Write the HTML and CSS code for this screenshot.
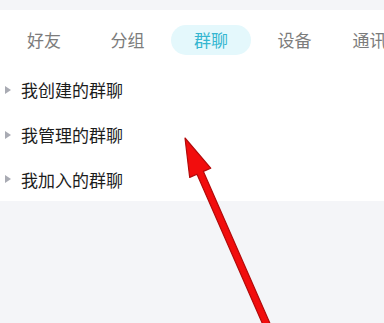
FILE: index.html
```html
<!DOCTYPE html>
<html lang="zh">
<head>
<meta charset="utf-8">
<link rel="stylesheet" href="styles.css">
</head>
<body>
<div class="page">
  <div class="panel">
    <div class="tabs">
      <div class="tab">好友</div>
      <div class="tab">分组</div>
      <div class="tab active">群聊</div>
      <div class="tab">设备</div>
      <div class="tab">通讯录</div>
    </div>
    <div class="list">
      <div class="row"><span class="tri"></span><span class="label">我创建的群聊</span></div>
      <div class="row"><span class="tri"></span><span class="label">我管理的群聊</span></div>
      <div class="row last"><span class="tri"></span><span class="label">我加入的群聊</span></div>
    </div>
  </div>
  <svg class="arrow" width="384" height="323" viewBox="0 0 384 323">
    <polygon points="185,138 210.7,168.2 203.4,171.4 274.4,333.5 268,336.3 197,174.2 189.7,177.4" fill="#f20d0d" stroke="#b30a0a" stroke-width="1.2" stroke-linejoin="round"/>
  </svg>
</div>
</body>
</html>
```
FILE: styles.css
```css
html, body {
  margin: 0;
  padding: 0;
  background: #f4f5f8;
}
.page {
  position: relative;
  width: 384px;
  height: 323px;
  overflow: hidden;
  padding-top: 10px;
  box-sizing: border-box;
  font-family: "Noto Sans CJK SC", "Noto Sans", sans-serif;
}
.panel {
  background: #ffffff;
}
.tabs {
  display: flex;
  gap: 3.5px;
  padding: 15px 0 12px 4px;
  white-space: nowrap;
}
.tab {
  flex: 0 0 80px;
  height: 30px;
  line-height: 30px;
  text-align: center;
  font-size: 17px;
  color: #7c7c7c;
  border-radius: 15px;
}
.tab.active {
  background: #e4f8fc;
  color: #35b6d0;
}
.list {
  display: flex;
  flex-direction: column;
}
.row {
  height: 45px;
  display: flex;
  align-items: center;
  padding-left: 5px;
}
.row.last {
  height: 44px;
}
.tri {
  width: 0;
  height: 0;
  border-left: 6px solid #a9abb3;
  border-top: 4px solid transparent;
  border-bottom: 4px solid transparent;
  margin-right: 10px;
}
.label {
  font-size: 17px;
  color: #1c1c1c;
}
.arrow {
  position: absolute;
  left: 0;
  top: 0;
}
```
